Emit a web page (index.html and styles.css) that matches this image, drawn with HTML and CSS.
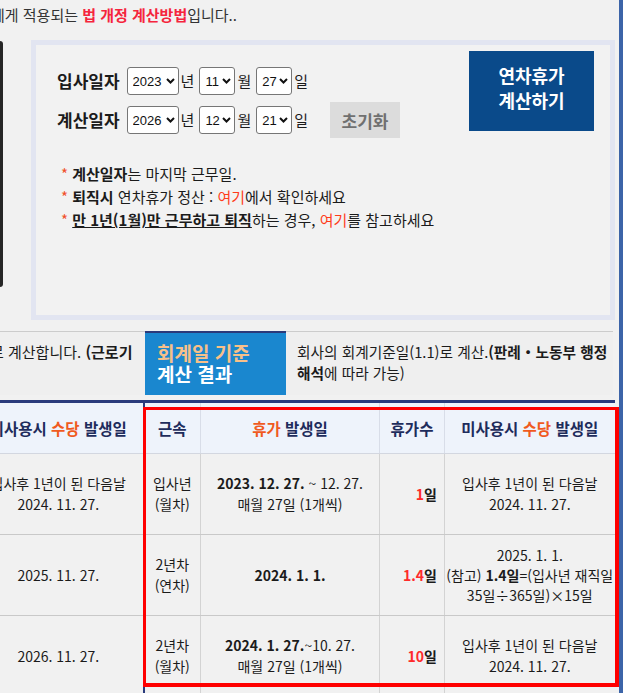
FILE: index.html
```html
<!DOCTYPE html>
<html lang="ko">
<head>
<meta charset="utf-8">
<title>연차휴가 계산기</title>
<link rel="stylesheet" href="styles.css">
</head>
<body>
<div class="frame">
  <div class="main">
    <p class="intro">에게 적용되는 <b class="hl">법 개정 계산방법</b>입니다..</p>

    <div class="calc">
      <div class="device"></div>
      <div class="box">
        <div class="form">
          <div class="row">
            <span class="label">입사일자</span>
            <span class="pick y"><select><option>2023</option></select><svg width="9" height="6" viewBox="0 0 9 6"><polyline points="1,1 4.5,4.5 8,1" fill="none" stroke="#111" stroke-width="2"/></svg></span>
            <span class="unit">년</span>
            <span class="pick m"><select><option>11</option></select><svg width="9" height="6" viewBox="0 0 9 6"><polyline points="1,1 4.5,4.5 8,1" fill="none" stroke="#111" stroke-width="2"/></svg></span>
            <span class="unit">월</span>
            <span class="pick m"><select><option>27</option></select><svg width="9" height="6" viewBox="0 0 9 6"><polyline points="1,1 4.5,4.5 8,1" fill="none" stroke="#111" stroke-width="2"/></svg></span>
            <span class="unit">일</span>
          </div>
          <div class="row">
            <span class="label">계산일자</span>
            <span class="pick y"><select><option>2026</option></select><svg width="9" height="6" viewBox="0 0 9 6"><polyline points="1,1 4.5,4.5 8,1" fill="none" stroke="#111" stroke-width="2"/></svg></span>
            <span class="unit">년</span>
            <span class="pick m"><select><option>12</option></select><svg width="9" height="6" viewBox="0 0 9 6"><polyline points="1,1 4.5,4.5 8,1" fill="none" stroke="#111" stroke-width="2"/></svg></span>
            <span class="unit">월</span>
            <span class="pick m"><select><option>21</option></select><svg width="9" height="6" viewBox="0 0 9 6"><polyline points="1,1 4.5,4.5 8,1" fill="none" stroke="#111" stroke-width="2"/></svg></span>
            <span class="unit">일</span>
            <button class="reset" type="button">초기화</button>
          </div>
          <ul class="notes">
            <li><span class="star">*</span> <b>계산일자</b>는 마지막 근무일.</li>
            <li><span class="star">*</span> <b>퇴직시</b> 연차휴가 정산 : <a href="#">여기</a>에서 확인하세요</li>
            <li><span class="star">*</span> <b class="ul">만 1년(1월)만 근무하고 퇴직</b>하는 경우, <a href="#">여기</a>를 참고하세요</li>
          </ul>
        </div>
        <button class="go" type="button">연차휴가<br>계산하기</button>
      </div>
    </div>

    <div class="tabs">
      <div class="side left"><span>로 계산합니다. <b>(근로기</b></span></div>
      <div class="tab"><span class="o">회계일 기준</span><br>계산 결과</div>
      <div class="side right">회사의 회계기준일(1.1)로 계산.<b>(판례・노동부 행정<br>해석</b>에 따라 가능)</div>
    </div>

    <div class="results">
      <table class="tbl">
        <colgroup>
          <col class="c1"><col class="c2"><col class="c3"><col class="c4"><col class="c5">
        </colgroup>
        <thead>
          <tr>
            <th>미사용시 <span class="or">수당</span> 발생일</th>
            <th class="gs">근속</th>
            <th><span class="or">휴가</span> 발생일</th>
            <th>휴가수</th>
            <th>미사용시 <span class="or">수당</span> 발생일</th>
          </tr>
        </thead>
        <tbody>
          <tr>
            <td>입사후 1년이 된 다음날<br>2024. 11. 27.</td>
            <td class="gs">입사년<br>(월차)</td>
            <td><b>2023. 12. 27.</b> ~ 12. 27.<br>매월 27일 (1개씩)</td>
            <td class="num"><span class="rd">1</span>일</td>
            <td>입사후 1년이 된 다음날<br>2024. 11. 27.</td>
          </tr>
          <tr>
            <td>2025. 11. 27.</td>
            <td class="gs">2년차<br>(연차)</td>
            <td><b>2024. 1. 1.</b></td>
            <td class="num"><span class="rd">1.4</span>일</td>
            <td class="tight">2025. 1. 1.<br>(참고) <b>1.4일</b>=(입사년 재직일<br>35일÷365일)×15일</td>
          </tr>
          <tr>
            <td>2026. 11. 27.</td>
            <td class="gs">2년차<br>(월차)</td>
            <td><b>2024. 1. 27.</b>~10. 27.<br>매월 27일 (1개씩)</td>
            <td class="num"><span class="rd">10</span>일</td>
            <td>입사후 1년이 된 다음날<br>2024. 11. 27.</td>
          </tr>
        </tbody>
      </table>
      <div class="redbox"></div>
    </div>
  </div>
  <div class="rightbar"></div>
  <div class="edge"></div>
</div>
</body>
</html>
```

FILE: styles.css
```css
* { box-sizing: border-box; }
html, body { margin: 0; padding: 0; }
body {
  width: 628px;
  height: 693px;
  overflow: hidden;
  background: #f1f1f1;
  font-family: "Noto Sans CJK KR", "Noto Sans", sans-serif;
  color: #1b1b1b;
}
.frame { display: flex; height: 693px; }
.main { width: 619px; flex: none; }
.rightbar { width: 4px; flex: none; background: #3c64a8; }
.edge { flex: 1; background: #ffffff; }

.intro {
  margin: 0 0 0 -9px;
  height: 40px;
  line-height: 30px;
  font-size: 15px;
  color: #333;
  white-space: nowrap;
}
.intro .hl { color: #f5253d; font-weight: bold; }

.calc { display: flex; align-items: flex-start; gap: 28px; }
.device {
  width: 3px;
  height: 246px;
  margin-top: 1px;
  background: #262626;
  border-radius: 0 4px 4px 0;
}
.box {
  width: 584px;
  height: 280px;
  border: 5px solid #e2e5f1;
  background: #f2f2f2;
  display: flex;
  padding: 3px 16px 0 21px;
}
.form { flex: 1; padding-top: 19px; }
.row { display: flex; align-items: center; height: 28px; }
.row + .row { margin-top: 11px; }
.label { font-size: 17px; font-weight: bold; margin-right: 7px; line-height: 28px; }
.pick { position: relative; display: inline-flex; }
.pick select {
  -webkit-appearance: none;
  appearance: none;
  height: 28px;
  margin: 0;
  border: 1px solid #767676;
  border-radius: 3px;
  background: #fff;
  color: #111;
  font: 13px "Liberation Sans", Arial, sans-serif;
  padding: 0 0 0 5px;
}
.pick.y select { width: 52px; }
.pick.m select { width: 36px; }
.pick svg { position: absolute; right: 4px; top: 11px; pointer-events: none; }
.unit { font-size: 15px; line-height: 28px; margin: 0 5px 0 2px; }
.reset {
  flex: none;
  margin-left: 17px;
  width: 70px;
  height: 36px;
  padding: 0;
  border: 0;
  background: #dcdcdc;
  color: #707070;
  font: bold 17px "Noto Sans CJK KR", sans-serif;
}
.notes {
  margin: 28px 0 0 4px;
  padding: 0;
  list-style: none;
  font-size: 15px;
  line-height: 23px;
}
.notes .star { color: #f0502a; }
.notes a { color: #ff3c1a; text-decoration: none; }
.notes .ul { text-decoration: underline; }
.go {
  flex: none;
  width: 125px;
  height: 80px;
  margin-top: 3px;
  padding: 0 0 7px;
  border: 0;
  background: #0a4a8a;
  color: #fff;
  font: bold 18px/25px "Noto Sans CJK KR", sans-serif;
}

.tabs { display: flex; margin-top: 11px; height: 64px; }
.tabs .side {
  background: #efefef;
  border-top: 1px solid #cccccc;
  font-size: 15px;
  line-height: 21px;
  padding-top: 9px;
}
.tabs .left { width: 145px; white-space: nowrap; overflow: hidden; }
.tabs .left span { display: block; margin-left: -10px; }
.tab {
  width: 141px;
  background: #1a87cf;
  border-top: 2px solid #2b3a7a;
  color: #fff;
  font-weight: bold;
  font-size: 19px;
  line-height: 21px;
  padding: 9px 0 0 12px;
  white-space: nowrap;
}
.tab .o { color: #f8c089; }
.tabs .right { width: 327px; padding-left: 11px; font-size: 14.7px; white-space: nowrap; }

.results { position: relative; margin-top: 5px; }
.tbl {
  margin-left: -27px;
  width: 641px;
  border-collapse: collapse;
  table-layout: fixed;
  border-top: 3px solid #2a3b7c;
}
.c1 { width: 170px; }
.c2 { width: 57px; }
.c3 { width: 179px; }
.c4 { width: 65px; }
.c5 { width: 170px; }
.tbl th {
  height: 52px;
  padding: 0;
  background: #eef3fb;
  color: #1e2c5c;
  font-size: 15.5px;
  font-weight: bold;
  border-bottom: 1px solid #d3d7e0;
  border-left: 1px solid #d8dde8;
  white-space: nowrap;
}
.tbl td {
  height: 81px;
  padding: 0;
  text-align: center;
  font-size: 14px;
  line-height: 21px;
  border-bottom: 1px solid #c9c9c9;
  border-left: 1px solid #d3d3d3;
  white-space: nowrap;
}
.tbl .gs { border-left: 2px solid #2a3b7c; }
.tbl td.num { text-align: right; padding-right: 7px; font-weight: bold; font-size: 14px; }
.tbl td.tight { line-height: 20px; }
.or { color: #f05a1e; }
.rd { color: #ff2b2b; }
.redbox {
  position: absolute;
  left: 143px;
  top: 7px;
  width: 476px;
  height: 280px;
  border: 4px solid #ff0000;
  border-left-width: 3px;
  border-top-width: 3px;
}
```
